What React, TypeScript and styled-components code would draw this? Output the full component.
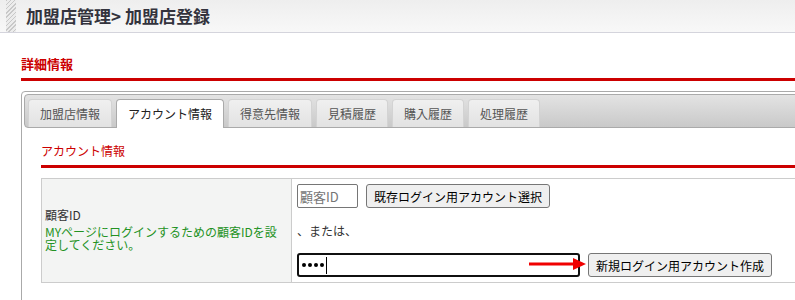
import React from "react";
import styled, { createGlobalStyle } from "styled-components";

const GlobalStyle = createGlobalStyle`
  html, body {
    margin: 0;
    padding: 0;
    overflow: hidden;
    background: #fff;
  }
  body {
    font-family: "Noto Sans CJK JP", "Noto Sans", sans-serif;
    font-size: 12px;
    color: #333;
  }
  * { box-sizing: border-box; }
`;

const Page = styled.div`
  width: 900px;
`;

const Header = styled.div`
  height: 33px;
  display: flex;
  align-items: stretch;
  background: linear-gradient(#eeeeee, #f8f8f8);
  border-bottom: 1px solid #d4d4dc;
  padding-left: 6px;
`;

const Hatch = styled.div`
  width: 10px;
  background: repeating-linear-gradient(
    135deg,
    #c8c8c8 0px,
    #c8c8c8 1px,
    #ececec 1px,
    #ececec 3px
  );
`;

const Title = styled.h1`
  margin: 0 0 0 10px;
  font-size: 17px;
  font-weight: bold;
  color: #33333d;
  line-height: 32px;
  letter-spacing: 0;
`;

const Content = styled.div`
  padding: 22px 0 0 21px;
`;

const SectionHeading = styled.h2<{ $size: number }>`
  margin: 0;
  font-size: ${(p) => p.$size}px;
  font-weight: ${(p) => (p.$size > 12 ? "bold" : "normal")};
  line-height: 18px;
  color: #cc0000;
  padding-bottom: 5px;
  border-bottom: 3px solid #cc0000;
`;

const TabsBox = styled.div`
  margin-top: 10px;
  border: 1px solid #aaaaaa;
  border-radius: 4px;
  padding: 2px;
`;

const TabBar = styled.div`
  display: flex;
  align-items: flex-start;
  gap: 4px;
  padding: 4px 3px 0;
  border: 1px solid #aaaaaa;
  border-radius: 4px;
  background: linear-gradient(#e3e3e3, #c9c9c9);
  height: 34px;
`;

const Tab = styled.div<{ $active?: boolean }>`
  height: ${(p) => (p.$active ? 29 : 28)}px;
  margin-bottom: ${(p) => (p.$active ? -1 : 0)}px;
  padding: 0 11px 1px;
  display: flex;
  align-items: center;
  font-size: 12px;
  white-space: nowrap;
  border: 1px solid ${(p) => (p.$active ? "#aaaaaa" : "#d3d3d3")};
  border-bottom: 0;
  border-radius: 4px 4px 0 0;
  color: ${(p) => (p.$active ? "#212121" : "#555555")};
  background: ${(p) =>
    p.$active ? "#ffffff" : "linear-gradient(#f0f0f0, #e2e2e2)"};
`;

const Panel = styled.div`
  padding: 14px 0 40px 17px;
`;

const FormTable = styled.div`
  margin-top: 10px;
  display: grid;
  grid-template-columns: 250px 1fr;
  border: 1px solid #cccccc;
`;

const LabelCell = styled.div`
  background: #f3f4f3;
  border-right: 1px solid #cccccc;
  padding: 0 8px 4px 3px;
  display: flex;
  flex-direction: column;
  justify-content: center;
  font-size: 12px;
`;

const LabelName = styled.div`
  color: #333;
  line-height: 15px;
  margin-bottom: 3px;
`;

const Hint = styled.div`
  color: #239223;
  line-height: 13px;
`;

const ValueCell = styled.div`
  padding: 5px;
  display: flex;
  flex-direction: column;
`;

const ControlRow = styled.div`
  position: relative;
  display: flex;
  align-items: center;
  gap: 8px;
  height: 24px;
`;

const TextInput = styled.input`
  width: 61px;
  height: 24px;
  border: 1px solid #767676;
  border-radius: 2px;
  padding: 0 2px;
  font-family: inherit;
  font-size: 13px;
  &::placeholder {
    color: #757575;
  }
`;

const Button = styled.button`
  height: 24px;
  padding: 0 7px;
  border: 1px solid #767676;
  border-radius: 3px;
  background: #efefef;
  color: #000;
  font-family: inherit;
  font-size: 12px;
  white-space: nowrap;
`;

const OrLine = styled.div`
  height: 45px;
  line-height: 45px;
  font-size: 12px;
  color: #333;
`;

const PasswordBox = styled.div`
  width: 283px;
  height: 24px;
  border: 2px solid #101010;
  border-radius: 3px;
  padding: 0 3px;
  display: flex;
  align-items: center;
  gap: 2px;
  background: #fff;
`;

const Dot = styled.span`
  width: 4px;
  height: 4px;
  border-radius: 50%;
  background: #000;
`;

const Caret = styled.span`
  width: 1px;
  height: 17px;
  background: #000;
`;

const Arrow = styled.svg`
  position: absolute;
  left: 232px;
  top: 5px;
`;

const tabs = ["加盟店情報", "アカウント情報", "得意先情報", "見積履歴", "購入履歴", "処理履歴"];

export default function App() {
  return (
    <Page>
      <GlobalStyle />
      <Header>
        <Hatch />
        <Title>加盟店管理&gt; 加盟店登録</Title>
      </Header>
      <Content>
        <SectionHeading $size={13}>詳細情報</SectionHeading>
        <TabsBox>
          <TabBar>
            {tabs.map((t, i) => (
              <Tab key={t} $active={i === 1}>
                {t}
              </Tab>
            ))}
          </TabBar>
          <Panel>
            <SectionHeading $size={12}>アカウント情報</SectionHeading>
            <FormTable>
              <LabelCell>
                <LabelName>顧客ID</LabelName>
                <Hint>MYページにログインするための顧客IDを設定してください。</Hint>
              </LabelCell>
              <ValueCell>
                <ControlRow>
                  <TextInput placeholder="顧客ID" />
                  <Button>既存ログイン用アカウント選択</Button>
                </ControlRow>
                <OrLine>、または、</OrLine>
                <ControlRow>
                  <PasswordBox>
                    <Dot />
                    <Dot />
                    <Dot />
                    <Dot />
                    <Caret />
                  </PasswordBox>
                  <Button>新規ログイン用アカウント作成</Button>
                  <Arrow width="57" height="12" viewBox="0 0 57 12">
                    <line x1="0" y1="6" x2="46" y2="6" stroke="#f00000" strokeWidth="3" />
                    <polygon points="44,0 57,6 44,12" fill="#f00000" />
                  </Arrow>
                </ControlRow>
              </ValueCell>
            </FormTable>
          </Panel>
        </TabsBox>
      </Content>
    </Page>
  );
}
